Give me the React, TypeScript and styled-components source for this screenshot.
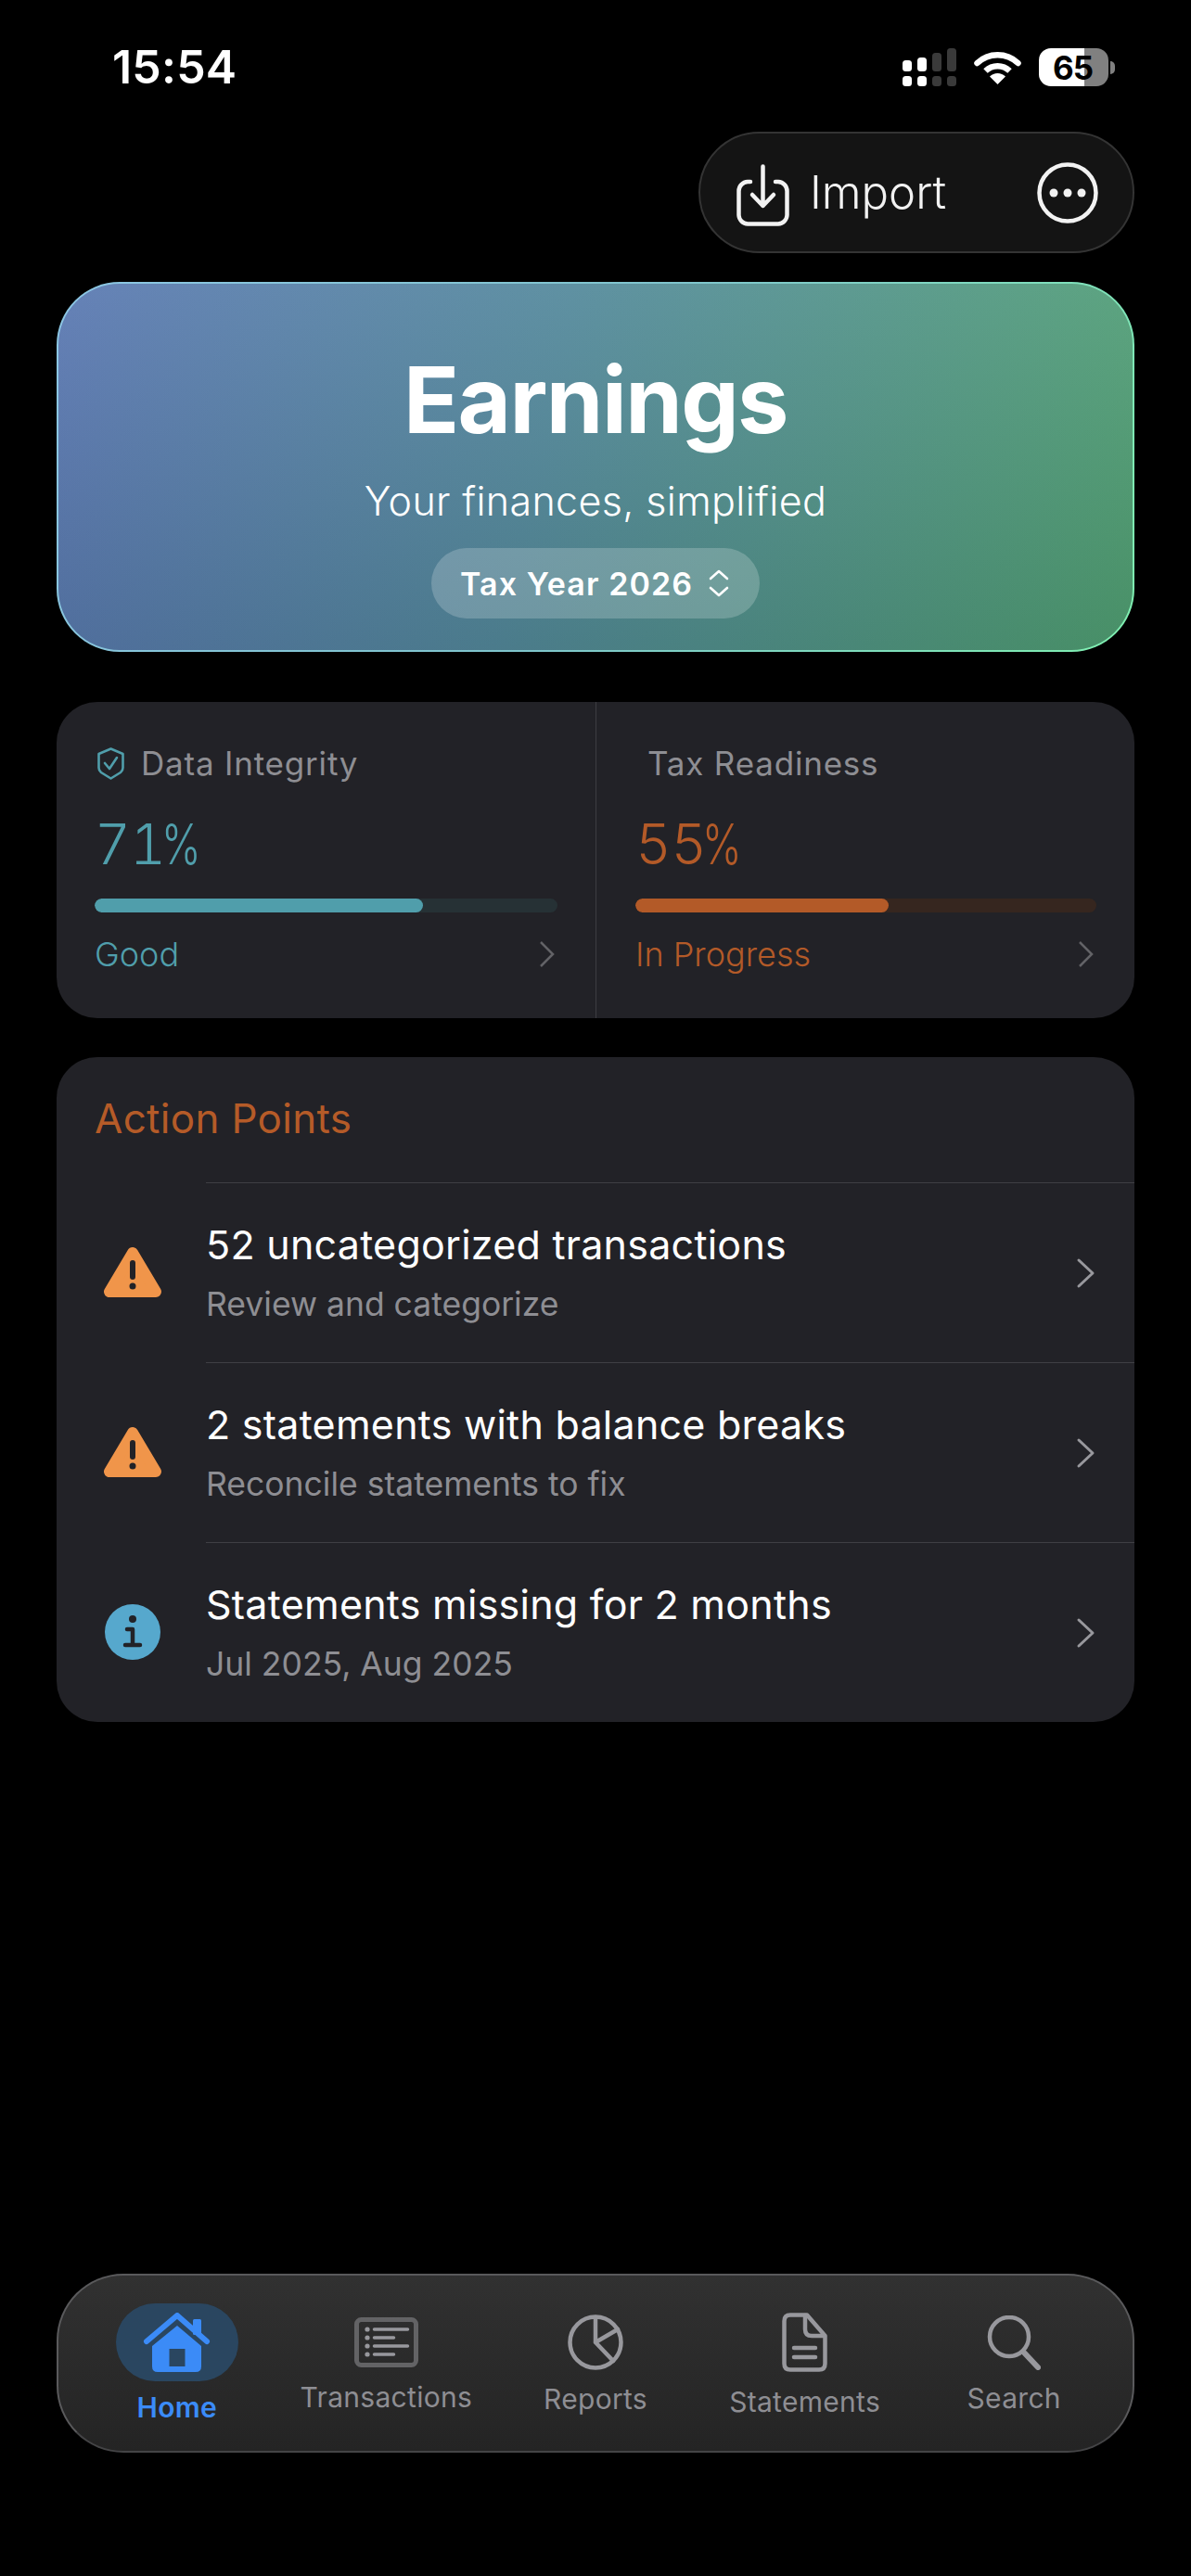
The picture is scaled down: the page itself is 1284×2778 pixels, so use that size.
import React from "react";
import styled, { createGlobalStyle } from "styled-components";

const Global = createGlobalStyle`
  html, body { margin: 0; padding: 0; background: #000; }
  * { box-sizing: border-box; }
`;

const Page = styled.div`
  width: 1284px;
  height: 2778px;
  background: #000;
  font-family: Inter, "Noto Sans", sans-serif;
  display: flex;
  flex-direction: column;
  padding: 52px 61px 133px;
  color: #fff;
  overflow: hidden;
`;

const StatusBar = styled.div`
  display: flex;
  align-items: center;
  height: 41px;
  padding: 0 21px 0 60px;
`;
const Clock = styled.div`
  font-size: 50px;
  font-weight: 600;
  letter-spacing: 0.2px;
  line-height: 41px;
`;
const StatusIcons = styled.div`
  margin-left: auto;
  display: flex;
  align-items: center;
`;
const Signal = styled.svg`
  width: 58px;
  height: 41px;
`;
const Wifi = styled.svg`
  width: 51px;
  height: 37px;
  margin: 0 19px;
`;
const Battery = styled.div`
  width: 75px;
  height: 41px;
  border-radius: 13px;
  background: linear-gradient(90deg, #fff 65%, #808080 65%);
  color: #000;
  font-size: 35px;
  font-weight: 700;
  letter-spacing: -1px;
  display: flex;
  align-items: center;
  justify-content: center;
  padding-right: 2px;
`;
const BatteryNub = styled.div`
  width: 5px;
  height: 14px;
  margin-left: 2px;
  background: #808080;
  border-radius: 0 7px 7px 0;
`;

const ActionRow = styled.div`
  display: flex;
  justify-content: flex-end;
  margin-top: 49px;
`;
const ActionPill = styled.div`
  width: 470px;
  height: 131px;
  border-radius: 66px;
  background: #141414;
  border: 2px solid #343434;
  display: flex;
  align-items: center;
  padding: 0 37px 0 39px;
  color: #f2f2f2;
`;
const ImportIcon = styled.svg`
  width: 57px;
  height: 67px;
  margin-top: 6px;
`;
const ImportLabel = styled.div`
  font-size: 49px;
  font-weight: 300;
  margin-left: 22px;
  letter-spacing: 0;
`;
const MoreIcon = styled.svg`
  width: 66px;
  height: 66px;
  margin-left: auto;
`;

const Hero = styled.div`
  margin-top: 31px;
  height: 399px;
  border-radius: 68px;
  border: 2px solid transparent;
  background:
    linear-gradient(180deg, rgba(255, 255, 255, 0.07), rgba(0, 0, 0, 0.1)) padding-box,
    linear-gradient(102deg, #5a78b2 0%, #53899b 45%, #50a072 100%) padding-box,
    linear-gradient(115deg, #8cc6e4 0%, #7fc4cc 50%, #7ff0b0 100%) border-box;
  display: flex;
  flex-direction: column;
  align-items: center;
`;
const HeroTitle = styled.div`
  font-size: 99px;
  font-weight: 700;
  line-height: 120px;
  margin-top: 65px;
  letter-spacing: -1.6px;
`;
const HeroSubtitle = styled.div`
  font-size: 43px;
  font-weight: 300;
  line-height: 52px;
  margin-top: 23px;
  letter-spacing: 0.35px;
`;
const YearPill = styled.div`
  margin-top: 25px;
  width: 354px;
  height: 76px;
  border-radius: 38px;
  background: rgba(255, 255, 255, 0.2);
  display: flex;
  align-items: center;
  padding-left: 31px;
  font-size: 34px;
  font-weight: 600;
  letter-spacing: 1.1px;
`;
const UpDown = styled.svg`
  width: 22px;
  height: 30px;
  margin-left: 17px;
`;

const MetricsCard = styled.div`
  margin-top: 54px;
  height: 341px;
  border-radius: 44px;
  background: #222227;
  display: grid;
  grid-template-columns: 581px 1fr;
`;
const MetricCell = styled.div<{ $divider?: boolean }>`
  padding: 45px 41px 0 ${(p) => (p.$divider ? "42px" : "41px")};
  border-left: ${(p) => (p.$divider ? "1px solid #3d3d42" : "none")};
  display: flex;
  flex-direction: column;
`;
const MetricHead = styled.div<{ $indent?: boolean }>`
  display: flex;
  align-items: center;
  gap: 18px;
  height: 42px;
  padding-left: ${(p) => (p.$indent ? "13px" : "3px")};
  font-size: 35px;
  color: #8e8e93;
  letter-spacing: 0.8px;
`;
const Shield = styled.svg`
  width: 29px;
  height: 35px;
`;
const MetricValue = styled.div<{ $color: string }>`
  margin-top: 31px;
  font-size: 60px;
  font-weight: 350;
  line-height: 70px;
  height: 70px;
  color: ${(p) => p.$color};
  letter-spacing: -0.5px;
  font-variant-numeric: tabular-nums;
`;
const Percent = styled.span`
  display: inline-block;
  margin-left: -5px;
  transform: scaleX(0.76);
  transform-origin: left center;
`;
const Track = styled.div<{ $color: string }>`
  margin-top: 24px;
  height: 15px;
  border-radius: 8px;
  background: ${(p) => p.$color};
  overflow: hidden;
`;
const Fill = styled.div<{ $color: string }>`
  height: 100%;
  border-radius: 8px;
  background: ${(p) => p.$color};
`;
const MetricFoot = styled.div<{ $color: string }>`
  margin-top: 25px;
  height: 40px;
  display: flex;
  align-items: center;
  justify-content: space-between;
  font-size: 36px;
  font-weight: 300;
  color: ${(p) => p.$color};
`;
const SmallChevron = styled.svg`
  width: 18px;
  height: 30px;
  margin-right: 2px;
`;

const ActionsCard = styled.div`
  margin-top: 42px;
  height: 717px;
  border-radius: 44px;
  background: #222227;
  display: flex;
  flex-direction: column;
`;
const ActionsTitle = styled.div`
  height: 135px;
  padding: 40px 0 0 41px;
  font-size: 44px;
  line-height: 52px;
  font-weight: 400;
  letter-spacing: 0.3px;
  color: #b55b28;
`;
const Row = styled.div`
  height: 194px;
  display: flex;
  align-items: center;
`;
const RowIcon = styled.div`
  width: 161px;
  flex: none;
  display: flex;
  justify-content: center;
  padding-left: 3px;
`;
const RowBody = styled.div`
  flex: 1;
  height: 100%;
  border-top: 1px solid #3f3f44;
  padding-right: 41px;
  display: flex;
  align-items: center;
`;
const RowText = styled.div`
  flex: 1;
  padding-bottom: 2px;
`;
const RowTitle = styled.div`
  font-size: 43px;
  line-height: 52px;
  font-weight: 400;
  letter-spacing: 0.25px;
`;
const RowSubtitle = styled.div`
  font-size: 35.5px;
  line-height: 42px;
  margin-top: 18px;
  color: #8e8e93;
  font-weight: 400;
`;
const BigChevron = styled.svg`
  width: 22px;
  height: 34px;
`;

const TabBar = styled.nav`
  margin-top: auto;
  height: 193px;
  border-radius: 72px;
  border: 2px solid #5a5a5c;
  border-bottom-color: #444446;
  background: linear-gradient(180deg, #313131, #242424);
  display: grid;
  grid-template-columns: repeat(5, 1fr);
  padding: 30px 15px 0;
`;
const Tab = styled.div`
  display: flex;
  flex-direction: column;
  align-items: center;
`;
const TabSlot = styled.div<{ $active?: boolean }>`
  width: 132px;
  height: 84px;
  border-radius: 42px;
  background: ${(p) => (p.$active ? "#2a4660" : "transparent")};
  display: flex;
  align-items: center;
  justify-content: center;
`;
const TabLabel = styled.div<{ $active?: boolean; $nudge: number }>`
  margin-top: ${(p) => p.$nudge}px;
  font-size: 30px;
  line-height: 36px;
  font-weight: ${(p) => (p.$active ? 600 : 400)};
  color: ${(p) => (p.$active ? "#3b8bf7" : "#8e8e93")};
  letter-spacing: 0.3px;
`;

const ChevronSmall = () => (
  <SmallChevron viewBox="0 0 18 30" fill="none" stroke="#636367" strokeWidth="2.5">
    <path d="M2 2 L15 15 L2 28" />
  </SmallChevron>
);
const ChevronBig = () => (
  <BigChevron viewBox="0 0 22 34" fill="none" stroke="#98989d" strokeWidth="3" strokeLinecap="round" strokeLinejoin="round">
    <path d="M3 3 L18 17 L3 31" />
  </BigChevron>
);

const WarningIcon = () => (
  <svg width="62" height="56" viewBox="0 0 62 56">
    <path d="M31 7 L6 49 H56 Z" fill="#f0954a" stroke="#f0954a" strokeWidth="12" strokeLinejoin="round" />
    <rect x="28" y="15" width="6" height="21" rx="3" fill="#222227" />
    <circle cx="31" cy="43" r="3.5" fill="#222227" />
  </svg>
);
const InfoIcon = () => (
  <svg width="60" height="60" viewBox="0 0 60 60">
    <circle cx="30" cy="30" r="30" fill="#56a8cd" />
    <circle cx="30" cy="16" r="4" fill="#222227" />
    <path d="M24 27 H30 V44 M22 44 H38" fill="none" stroke="#222227" strokeWidth="4.5" strokeLinecap="round" strokeLinejoin="round" />
  </svg>
);

const HomeIcon = () => (
  <svg width="73" height="64" viewBox="0 0 73 64">
    <path d="M4 31 L37 3 L69 31" fill="none" stroke="#3b8bf7" strokeWidth="6" strokeLinecap="round" strokeLinejoin="round" />
    <rect x="54" y="7" width="9" height="17" rx="1.5" fill="#3b8bf7" />
    <path
      fillRule="evenodd"
      fill="#3b8bf7"
      d="M37 14 L63 36 V58 Q63 64 57 64 H16 Q10 64 10 58 V36 Z M28.5 39 V58 H45.5 V39 Z"
    />
  </svg>
);
const TransactionsIcon = () => (
  <svg width="69" height="54" viewBox="0 0 69 54" fill="none">
    <rect x="2.5" y="2.5" width="64" height="49" rx="5" stroke="#636365" strokeWidth="5" />
    <g fill="#98989d">
      <circle cx="14" cy="13" r="2.6" />
      <circle cx="14" cy="22" r="2.6" />
      <circle cx="14" cy="31" r="2.6" />
      <circle cx="14" cy="40" r="2.6" />
    </g>
    <path d="M21.5 13 H57.5 M21.5 22 H42.5 M21.5 31 H57.5 M21.5 40 H42.5" stroke="#98989d" strokeWidth="3.5" strokeLinecap="round" />
  </svg>
);
const ReportsIcon = () => (
  <svg width="60" height="60" viewBox="0 0 60 60" fill="none" stroke="#98989d" strokeWidth="4.5" strokeLinecap="round" strokeLinejoin="round">
    <circle cx="30" cy="30" r="27.5" />
    <path d="M30 3 V30 L54 16 M30 30 L49 50" />
  </svg>
);
const StatementsIcon = () => (
  <svg width="49" height="64" viewBox="0 0 49 64" fill="none" stroke="#98989d" strokeWidth="4.5" strokeLinecap="round" strokeLinejoin="round">
    <path d="M9 2.5 H27 L46.5 25 V55 Q46.5 61.5 40 61.5 H9 Q2.5 61.5 2.5 55 V9 Q2.5 2.5 9 2.5 Z" />
    <path d="M25 3 V18 Q25 25 32 25 H46" />
    <path d="M13 38 H36 M13 48 H36" />
  </svg>
);
const SearchIcon = () => (
  <svg width="58" height="59" viewBox="0 0 58 59" fill="none" stroke="#98989d" strokeLinecap="round">
    <circle cx="24" cy="23" r="21" strokeWidth="4.5" />
    <path d="M40 40 L55 56" strokeWidth="6" />
  </svg>
);

const rows = [
  { icon: <WarningIcon />, title: "52 uncategorized transactions", sub: "Review and categorize" },
  { icon: <WarningIcon />, title: "2 statements with balance breaks", sub: "Reconcile statements to fix" },
  { icon: <InfoIcon />, title: "Statements missing for 2 months", sub: "Jul 2025, Aug 2025" },
];

const tabs = [
  { icon: <HomeIcon />, label: "Home", nudge: 10, active: true },
  { icon: <TransactionsIcon />, label: "Transactions", nudge: -1 },
  { icon: <ReportsIcon />, label: "Reports", nudge: 1 },
  { icon: <StatementsIcon />, label: "Statements", nudge: 4 },
  { icon: <SearchIcon />, label: "Search", nudge: 0 },
];

export default function App() {
  return (
    <Page>
      <Global />
      <StatusBar>
        <Clock>15:54</Clock>
        <StatusIcons>
          <Signal viewBox="0 0 58 41">
            <g fill="#fff">
              <rect x="0" y="13" width="10" height="12" rx="3.5" />
              <rect x="0" y="30" width="10" height="11" rx="3.5" />
              <rect x="16" y="10" width="10" height="15" rx="3.5" />
              <rect x="16" y="30" width="10" height="11" rx="3.5" />
            </g>
            <g fill="#3a3a3a">
              <rect x="32" y="5" width="10" height="20" rx="3.5" />
              <rect x="32" y="30" width="10" height="11" rx="3.5" />
              <rect x="48" y="0" width="10" height="25" rx="3.5" />
              <rect x="48" y="30" width="10" height="11" rx="3.5" />
            </g>
          </Signal>
          <Wifi viewBox="0 0 51 37" fill="none">
            <path d="M3.5 14 A32 32 0 0 1 47.5 14" stroke="#fff" strokeWidth="6.5" strokeLinecap="round" />
            <path d="M12.5 22.5 A19 19 0 0 1 38.5 22.5" stroke="#fff" strokeWidth="6.5" />
            <path d="M25.5 37 L17 28.5 A12 12 0 0 1 34 28.5 Z" fill="#fff" />
          </Wifi>
          <Battery>65</Battery>
          <BatteryNub />
        </StatusIcons>
      </StatusBar>

      <ActionRow>
        <ActionPill>
          <ImportIcon viewBox="0 0 57 67" fill="none" stroke="#f2f2f2" strokeWidth="4.5" strokeLinecap="round" strokeLinejoin="round">
            <path d="M15 19 H12 A10 10 0 0 0 2.5 29 V55 A10 10 0 0 0 12 64.5 H45 A10 10 0 0 0 54.5 55 V29 A10 10 0 0 0 45 19 H42" />
            <path d="M28.5 2.5 V45 M17 33 L28.5 45 L40 33" />
          </ImportIcon>
          <ImportLabel>Import</ImportLabel>
          <MoreIcon viewBox="0 0 66 66">
            <circle cx="33" cy="33" r="30.5" fill="none" stroke="#f2f2f2" strokeWidth="4.5" />
            <circle cx="18" cy="33" r="4.5" fill="#f2f2f2" />
            <circle cx="33" cy="33" r="4.5" fill="#f2f2f2" />
            <circle cx="48" cy="33" r="4.5" fill="#f2f2f2" />
          </MoreIcon>
        </ActionPill>
      </ActionRow>

      <Hero>
        <HeroTitle>Earnings</HeroTitle>
        <HeroSubtitle>Your finances, simplified</HeroSubtitle>
        <YearPill>
          Tax Year 2026
          <UpDown viewBox="0 0 22 30" fill="none" stroke="#fff" strokeWidth="2.6" strokeLinecap="round" strokeLinejoin="round">
            <path d="M2 10 L11 2 L20 10 M2 20 L11 28 L20 20" />
          </UpDown>
        </YearPill>
      </Hero>

      <MetricsCard>
        <MetricCell>
          <MetricHead>
            <Shield viewBox="0 0 29 35" fill="none" stroke="#509eab" strokeWidth="2.6" strokeLinejoin="round" strokeLinecap="round">
              <path d="M14.5 1.5 L27.5 7 V22 Q27.5 25 25 27 L14.5 33.5 L4 27 Q1.5 25 1.5 22 V7 Z" />
              <path d="M8 17 L13 23 L21 11" />
            </Shield>
            Data Integrity
          </MetricHead>
          <MetricValue $color="#509eab">
            71<Percent>%</Percent>
          </MetricValue>
          <Track $color="#263135">
            <Fill $color="#509eab" style={{ width: "71%" }} />
          </Track>
          <MetricFoot $color="#509eab">
            Good
            <ChevronSmall />
          </MetricFoot>
        </MetricCell>
        <MetricCell $divider>
          <MetricHead $indent>Tax Readiness</MetricHead>
          <MetricValue $color="#b35a28">
            55<Percent>%</Percent>
          </MetricValue>
          <Track $color="#36261f">
            <Fill $color="#b35a28" style={{ width: "55%" }} />
          </Track>
          <MetricFoot $color="#b35a28">
            In Progress
            <ChevronSmall />
          </MetricFoot>
        </MetricCell>
      </MetricsCard>

      <ActionsCard>
        <ActionsTitle>Action Points</ActionsTitle>
        {rows.map((r) => (
          <Row key={r.title}>
            <RowIcon>{r.icon}</RowIcon>
            <RowBody>
              <RowText>
                <RowTitle>{r.title}</RowTitle>
                <RowSubtitle>{r.sub}</RowSubtitle>
              </RowText>
              <ChevronBig />
            </RowBody>
          </Row>
        ))}
      </ActionsCard>

      <TabBar>
        {tabs.map((t) => (
          <Tab key={t.label}>
            <TabSlot $active={t.active}>{t.icon}</TabSlot>
            <TabLabel $active={t.active} $nudge={t.nudge}>
              {t.label}
            </TabLabel>
          </Tab>
        ))}
      </TabBar>
    </Page>
  );
}
